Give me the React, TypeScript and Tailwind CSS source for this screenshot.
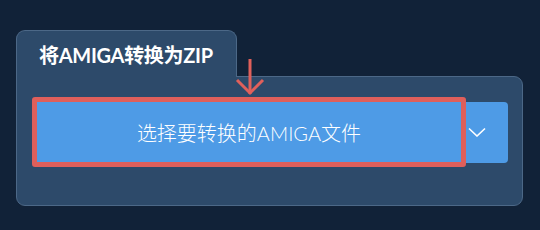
import React from "react";

const ArrowDown = () => (
  <svg
    className="absolute left-[219px] top-[29px] h-[38px] w-[30px]"
    viewBox="0 0 30 38"
    fill="none"
    stroke="#e0605b"
    strokeWidth="3"
    strokeLinecap="butt"
  >
    <path d="M15 0v35" />
    <path d="M2 21l13 13 13-13" />
  </svg>
);

const Chevron = () => (
  <svg className="h-[10px] w-[18px]" viewBox="0 0 18 10" fill="none">
    <path d="M1 1.5l8 7.5 8-7.5" stroke="#ffffff" strokeWidth="1.6" />
  </svg>
);

export default function App() {
  return (
    <div
      className="h-[230px] w-[540px] bg-[#112238] pl-4 pt-[30px]"
      style={{ fontFamily: 'Lato, "Noto Sans CJK SC", sans-serif' }}
    >
      <div className="relative w-[507px]">
        <div className="relative z-10 -mb-px flex h-[47px] w-[221px] items-center rounded-t-[9px] border border-b-0 border-[#4c6887] bg-[#2d4a6a] pl-[22px] pt-[2px]">
          <span className="text-[20px] font-bold tracking-[-0.3px] text-white">
            将AMIGA转换为ZIP
          </span>
        </div>
        <div className="h-[130px] rounded-b-[9px] rounded-tr-[9px] border border-[#4c6887] bg-[#2d4a6a] pl-[15px] pt-[20px]">
          <div className="flex items-center">
            <button className="flex h-[70px] w-[434px] items-center justify-center rounded-[3px] border-[5px] border-[#df5f5b] bg-[#4e9be6] pt-px text-[20px] font-light text-white">
              选择要转换的AMIGA文件
            </button>
            <button className="flex h-[61px] w-[42px] items-center rounded-r-[4px] bg-[#4e9be6] pl-[2px]">
              <Chevron />
            </button>
          </div>
        </div>
        <ArrowDown />
      </div>
    </div>
  );
}
